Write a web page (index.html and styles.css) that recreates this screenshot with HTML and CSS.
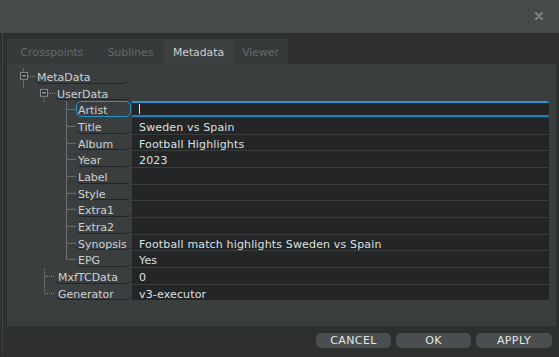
FILE: index.html
```html
<!DOCTYPE html>
<html>
<head>
<meta charset="utf-8">
<link rel="stylesheet" href="styles.css">
</head>
<body>
<div class="window">
  <div class="titlebar">
    <svg class="close" width="8" height="8" viewBox="0 0 8 8"><path d="M1 1L7 7M7 1L1 7" stroke="#7b7f81" stroke-width="2.4" stroke-linecap="round"/></svg>
  </div>
  <div class="main">
    <div class="edge"></div>
    <div class="content">
      <div class="tabs">
        <div class="tab t1">Crosspoints</div>
        <div class="tab t2">Sublines</div>
        <div class="tab t3 active">Metadata</div>
        <div class="tab t4">Viewer</div>
      </div>
      <div class="panel">
        <div class="tree">
          <div class="row">
            <svg class="gutter g0" viewBox="0 0 28 17" preserveAspectRatio="none"><path d="M16.5 0V4M16.5 12V17" stroke="#8a8e90" stroke-dasharray="1 1"/><rect x="13.5" y="4.5" width="7" height="7" fill="#2e3132" stroke="#8a8e90"/><path d="M15 8H19" stroke="#c8cccc"/><path d="M21 8.5H28" stroke="#8a8e90" stroke-dasharray="1 1"/></svg>
            <div class="label group">MetaData</div>
          </div>
          <div class="row">
            <svg class="gutter g1" viewBox="0 0 48 17" preserveAspectRatio="none"><path d="M16.5 0V3" stroke="#8a8e90" stroke-dasharray="1 1"/><path d="M37 12V17" stroke="#8a8e90" stroke-dasharray="1 1"/><rect x="33.5" y="4.5" width="7" height="7" fill="#2e3132" stroke="#8a8e90"/><path d="M35 8H39" stroke="#c8cccc"/><path d="M41 8.5H48" stroke="#8a8e90" stroke-dasharray="1 1"/></svg>
            <div class="label group">UserData</div>
          </div>
          <div class="row">
            <svg class="gutter g2" viewBox="0 0 69 17" preserveAspectRatio="none"><path d="M37 0V2" stroke="#8a8e90" stroke-dasharray="1 1"/><path d="M59.5 0V17M59 8.5H69" stroke="#6d7173"/></svg>
            <div class="label sel">Artist</div>
            <div class="value edit"><span class="caret"></span></div>
          </div>
          <div class="row">
            <svg class="gutter g2" viewBox="0 0 69 17" preserveAspectRatio="none"><path d="M59.5 0V17M59 8.5H69" stroke="#6d7173"/></svg>
            <div class="label">Title</div>
            <div class="value">Sweden vs Spain</div>
          </div>
          <div class="row">
            <svg class="gutter g2" viewBox="0 0 69 17" preserveAspectRatio="none"><path d="M59.5 0V17M59 8.5H69" stroke="#6d7173"/></svg>
            <div class="label">Album</div>
            <div class="value">Football Highlights</div>
          </div>
          <div class="row">
            <svg class="gutter g2" viewBox="0 0 69 17" preserveAspectRatio="none"><path d="M59.5 0V17M59 8.5H69" stroke="#6d7173"/></svg>
            <div class="label">Year</div>
            <div class="value">2023</div>
          </div>
          <div class="row">
            <svg class="gutter g2" viewBox="0 0 69 17" preserveAspectRatio="none"><path d="M59.5 0V17M59 8.5H69" stroke="#6d7173"/></svg>
            <div class="label">Label</div>
            <div class="value"></div>
          </div>
          <div class="row">
            <svg class="gutter g2" viewBox="0 0 69 17" preserveAspectRatio="none"><path d="M59.5 0V17M59 8.5H69" stroke="#6d7173"/></svg>
            <div class="label">Style</div>
            <div class="value"></div>
          </div>
          <div class="row">
            <svg class="gutter g2" viewBox="0 0 69 17" preserveAspectRatio="none"><path d="M59.5 0V17M59 8.5H69" stroke="#6d7173"/></svg>
            <div class="label">Extra1</div>
            <div class="value"></div>
          </div>
          <div class="row">
            <svg class="gutter g2" viewBox="0 0 69 17" preserveAspectRatio="none"><path d="M59.5 0V17M59 8.5H69" stroke="#6d7173"/></svg>
            <div class="label">Extra2</div>
            <div class="value"></div>
          </div>
          <div class="row">
            <svg class="gutter g2" viewBox="0 0 69 17" preserveAspectRatio="none"><path d="M59.5 0V17M59 8.5H69" stroke="#6d7173"/></svg>
            <div class="label">Synopsis</div>
            <div class="value">Football match highlights Sweden vs Spain</div>
          </div>
          <div class="row">
            <svg class="gutter g2" viewBox="0 0 69 17" preserveAspectRatio="none"><path d="M59.5 0V8.5M59 8.5H69" stroke="#6d7173"/></svg>
            <div class="label">EPG</div>
            <div class="value">Yes</div>
          </div>
          <div class="row">
            <svg class="gutter g1" viewBox="0 0 48 17" preserveAspectRatio="none"><path d="M37.5 0V17M38 8.5H48" stroke="#8a8e90" stroke-dasharray="1 1"/></svg>
            <div class="label mid">MxfTCData</div>
            <div class="value">0</div>
          </div>
          <div class="row">
            <svg class="gutter g1" viewBox="0 0 48 17" preserveAspectRatio="none"><path d="M37.5 0V8.5M38 8.5H48" stroke="#8a8e90" stroke-dasharray="1 1"/></svg>
            <div class="label mid">Generator</div>
            <div class="value">v3-executor</div>
          </div>
        </div>
      </div>
      <div class="buttons">
        <div class="btn">CANCEL</div>
        <div class="btn">OK</div>
        <div class="btn wide">APPLY</div>
      </div>
    </div>
  </div>
</div>
</body>
</html>
```
FILE: styles.css
```css
html, body {
  margin: 0;
  padding: 0;
}
body {
  width: 559px;
  height: 357px;
  overflow: hidden;
  background: #2e302f;
  font-family: "DejaVu Sans", sans-serif;
  font-size: 11px;
  color: #d4d8d8;
}
.window {
  display: flex;
  flex-direction: column;
  height: 357px;
}
.titlebar {
  height: 33px;
  background: #464a4b;
  display: flex;
  justify-content: flex-end;
  align-items: flex-start;
  padding: 12px 16px 0 0;
  box-sizing: border-box;
}
.close {
  display: block;
}
.main {
  display: flex;
  height: 324px;
}
.edge {
  width: 1px;
  height: 320px;
  margin-left: 2px;
  margin-right: 4px;
  background: #404445;
}
.content {
  width: 549px;
  display: flex;
  flex-direction: column;
  padding-top: 6px;
}
.tabs {
  display: flex;
  height: 25px;
}
.tab {
  height: 25px;
  box-sizing: border-box;
  padding-top: 1px;
  line-height: 25px;
  text-align: center;
  background: #373a3b;
  color: #64686a;
  font-size: 10.8px;
}
.tab.active {
  background: #3d4142;
  color: #ccd0d0;
}
.t1 { width: 90px; }
.t2 { width: 67px; }
.t3 { width: 69px; }
.t4 { width: 55px; }
.panel {
  height: 262px;
  background: #3a3e3f;
  box-sizing: border-box;
  padding-top: 4px;
}
.tree {
  display: grid;
  grid-auto-rows: 16.67px;
}
.row {
  display: flex;
  align-items: stretch;
}
.gutter {
  display: block;
  flex: none;
  height: 100%;
}
.g0 { width: 28px; }
.g1 { width: 48px; }
.g2 { width: 69px; }
.label {
  flex: none;
  box-sizing: border-box;
  height: calc(100% - 1px);
  line-height: 16px;
  padding-top: 2px;
  padding-left: 2px;
  color: #cdd1d1;
  border-bottom: 1px solid #222425;
  border-radius: 0 0 5px 5px;
  white-space: nowrap;
  overflow: visible;
}
.g2 + .label { width: 55px; }
.g1 + .label { width: 76px; }
.label.mid { padding-left: 3px; }
.g0 + .label { width: 93px; }
.label.sel {
  border: 1px solid #2a8fc6;
  border-radius: 5px;
  padding-left: 1px;
  padding-top: 1px;
}
.value {
  flex: 1;
  margin-left: 1px;
  margin-right: 7px;
  box-sizing: border-box;
  height: calc(100% - 1px);
  background: #232526;
  padding-left: 7px;
  padding-top: 2px;
  line-height: 16px;
  color: #dde1e1;
  white-space: nowrap;
  letter-spacing: 0.15px;
}
.value.edit {
  padding-top: 0;
  border-top: 2px solid #2a93cf;
  border-bottom: 2px solid #1f7fb5;
  border-radius: 0 2px 2px 0;
  display: flex;
  align-items: center;
}
.caret {
  display: block;
  width: 1px;
  height: 10px;
  background: #e6eaea;
}
.buttons {
  display: flex;
  justify-content: flex-end;
  gap: 5px;
  margin-top: 7px;
  padding-right: 4px;
}
.btn {
  width: 75px;
  height: 15px;
  line-height: 15px;
  text-align: center;
  background: #4a4e50;
  border-radius: 5px;
  color: #e2e6e6;
  letter-spacing: 0.4px;
}
.btn.wide { width: 76px; }
```
